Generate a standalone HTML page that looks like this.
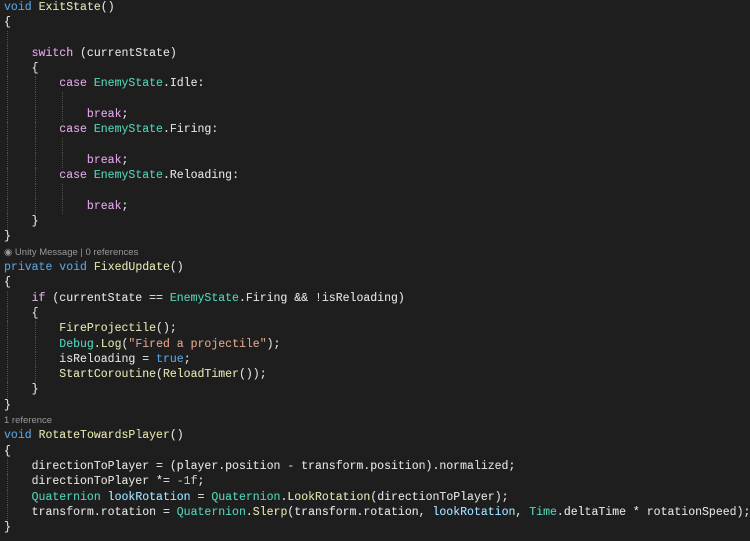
<!DOCTYPE html>
<html><head><meta charset="utf-8"><style>
html,body{margin:0;padding:0;background:#1e1e1e;width:750px;height:541px;overflow:hidden}
.c{position:absolute;left:4px;top:0;font-family:"Liberation Mono",monospace;font-size:11.52px;line-height:15.3px;color:#dadada;text-shadow:0 0 0.3px currentColor}
.l{height:15.3px;white-space:pre}
.i{display:inline-block;width:4ch;height:15.3px;vertical-align:top;position:relative}
.i::before{content:"";position:absolute;left:3px;top:0;bottom:0;border-left:1px dotted #505050}
.k{color:#569cd6}.p{color:#d8a0df}.t{color:#4ec9b0}.m{color:#dcdcaa}.v{color:#9cdcfe}.s{color:#d69d85}.n{color:#b5cea8}
.lens{font-family:"Liberation Sans",sans-serif;font-size:9.5px;color:#999;height:15.3px;line-height:15.3px;white-space:pre;text-shadow:none}
</style></head><body><div class="c"><div class="l"><span class="k">void</span> <span class="m">ExitState</span>()</div><div class="l">{</div><div class="l"><span class="i"></span></div><div class="l"><span class="i"></span><span class="p">switch</span> (currentState)</div><div class="l"><span class="i"></span>{</div><div class="l"><span class="i"></span><span class="i"></span><span class="p">case</span> <span class="t">EnemyState</span>.Idle:</div><div class="l"><span class="i"></span><span class="i"></span><span class="i"></span></div><div class="l"><span class="i"></span><span class="i"></span><span class="i"></span><span class="p">break</span>;</div><div class="l"><span class="i"></span><span class="i"></span><span class="p">case</span> <span class="t">EnemyState</span>.Firing:</div><div class="l"><span class="i"></span><span class="i"></span><span class="i"></span></div><div class="l"><span class="i"></span><span class="i"></span><span class="i"></span><span class="p">break</span>;</div><div class="l"><span class="i"></span><span class="i"></span><span class="p">case</span> <span class="t">EnemyState</span>.Reloading:</div><div class="l"><span class="i"></span><span class="i"></span><span class="i"></span></div><div class="l"><span class="i"></span><span class="i"></span><span class="i"></span><span class="p">break</span>;</div><div class="l"><span class="i"></span>}</div><div class="l">}</div><div class="lens">&#9673; Unity Message | 0 references</div><div class="l"><span class="k">private</span> <span class="k">void</span> <span class="m">FixedUpdate</span>()</div><div class="l">{</div><div class="l"><span class="i"></span><span class="p">if</span> (currentState == <span class="t">EnemyState</span>.Firing &amp;&amp; !isReloading)</div><div class="l"><span class="i"></span>{</div><div class="l"><span class="i"></span><span class="i"></span><span class="m">FireProjectile</span>();</div><div class="l"><span class="i"></span><span class="i"></span><span class="t">Debug</span>.<span class="m">Log</span>(<span class="s">"Fired a projectile"</span>);</div><div class="l"><span class="i"></span><span class="i"></span>isReloading = <span class="k">true</span>;</div><div class="l"><span class="i"></span><span class="i"></span><span class="m">StartCoroutine</span>(<span class="m">ReloadTimer</span>());</div><div class="l"><span class="i"></span>}</div><div class="l">}</div><div class="lens">1 reference</div><div class="l"><span class="k">void</span> <span class="m">RotateTowardsPlayer</span>()</div><div class="l">{</div><div class="l"><span class="i"></span>directionToPlayer = (player.position - transform.position).normalized;</div><div class="l"><span class="i"></span>directionToPlayer *= <span class="n">-1f</span>;</div><div class="l"><span class="i"></span><span class="t">Quaternion</span> <span class="v">lookRotation</span> = <span class="t">Quaternion</span>.<span class="m">LookRotation</span>(directionToPlayer);</div><div class="l"><span class="i"></span>transform.rotation = <span class="t">Quaternion</span>.<span class="m">Slerp</span>(transform.rotation, <span class="v">lookRotation</span>, <span class="t">Time</span>.deltaTime * rotationSpeed);</div><div class="l">}</div></div></body></html>
